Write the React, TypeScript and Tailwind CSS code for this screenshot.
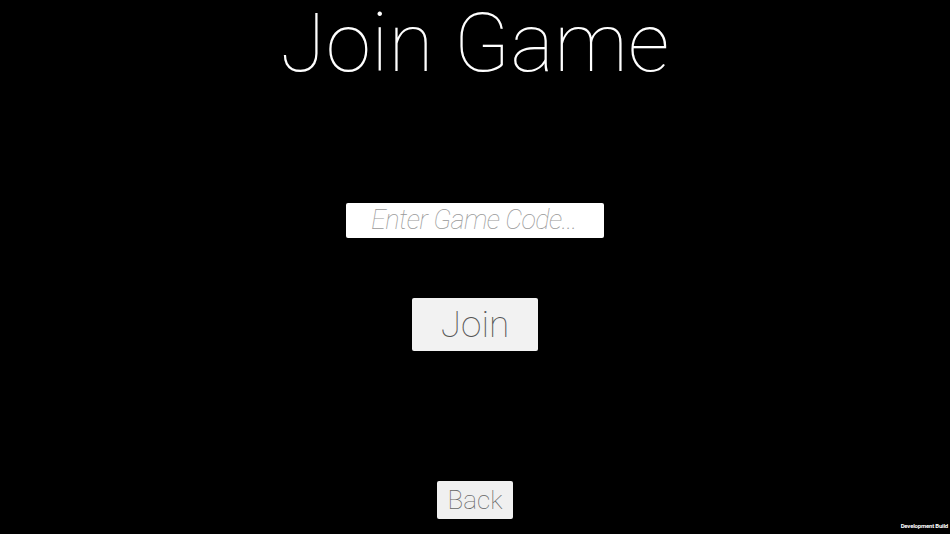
export default function App() {
  return (
    <main
      className="relative w-full h-[534px] bg-black overflow-hidden flex flex-col items-center"
      style={{ fontFamily: 'Roboto, "Open Sans", sans-serif' }}
    >
      <h1 className="mt-[2px] text-[82px] leading-none font-thin text-white tracking-[0.4px]">
        Join Game
      </h1>

      <input
        type="text"
        placeholder="Enter Game Code..."
        className="mt-[119px] w-[258px] h-[35px] rounded-[2px] bg-white pl-[25px] pr-[4px] text-[27px] font-thin italic tracking-[-0.6px] text-[#444] placeholder:text-[#999] placeholder:italic outline-none"
      />

      <button className="mt-[60px] w-[126px] h-[53px] rounded-[2px] bg-[#f2f2f2] text-[37px] font-thin text-[#555] leading-none">
        Join
      </button>

      <button className="mt-[130px] w-[76px] h-[38px] rounded-[2px] bg-[#f0f0f0] text-[26px] font-thin text-[#666] leading-none">
        Back
      </button>

      <span className="absolute right-[2px] bottom-[5px] text-[6px] font-bold tracking-[-0.2px] text-white leading-none">
        Development Build
      </span>
    </main>
  )
}
